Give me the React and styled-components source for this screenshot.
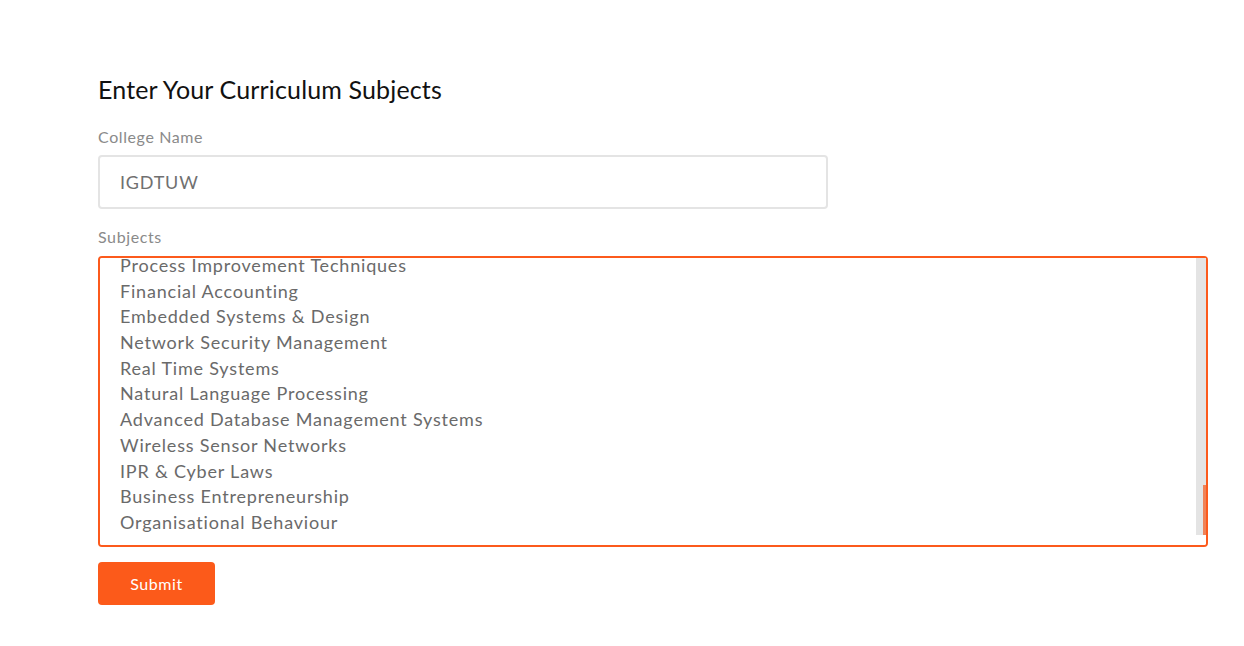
import React, { useLayoutEffect, useRef } from "react";
import styled, { createGlobalStyle } from "styled-components";

const GlobalStyle = createGlobalStyle`
  body {
    margin: 0;
    background: #fff;
    font-family: "Lato", "Open Sans", sans-serif;
  }
`;

const subjects = [
  "Engineering Mathematics I",
  "Engineering Physics",
  "Engineering Chemistry",
  "Basic Electrical Engineering",
  "Programming Fundamentals",
  "Engineering Graphics",
  "Communication Skills",
  "Environmental Sciences",
  "Engineering Mathematics II",
  "Data Structures",
  "Digital Logic Design",
  "Object Oriented Programming",
  "Discrete Mathematics",
  "Computer Organisation",
  "Operating Systems",
  "Design & Analysis of Algorithms",
  "Database Management Systems",
  "Theory of Computation",
  "Computer Networks",
  "Software Engineering",
  "Microprocessors",
  "Compiler Design",
  "Artificial Intelligence",
  "Machine Learning",
  "Computer Graphics",
  "Web Technologies",
  "Cloud Computing",
  "Information Security",
  "Data Mining",
  "Distributed Systems",
  "Mobile Computing",
  "Soft Computing",
  "Big Data Analytics",
  "Internet of Things",
  "Image Processing",
  "Parallel Computing",
  "Software Testing",
  "Human Computer Interaction",
  "Cryptography",
  "Operations Research",
  "Engineering Economics",
  "Project Management",
  "Principles of Management",
  "Technical Writing",
  "Process Improvement Techniques",
  "Financial Accounting",
  "Embedded Systems & Design",
  "Network Security Management",
  "Real Time Systems",
  "Natural Language Processing",
  "Advanced Database Management Systems",
  "Wireless Sensor Networks",
  "IPR & Cyber Laws",
  "Business Entrepreneurship",
  "Organisational Behaviour",
];

const Page = styled.main`
  padding: 74px 36px 40px 98px;
`;

const Form = styled.form`
  width: 1110px;
  display: flex;
  flex-direction: column;
`;

const Title = styled.h2`
  margin: 0 0 23px;
  font-size: 25px;
  font-weight: 400;
  letter-spacing: 0.15px;
  color: #111;
`;

const Label = styled.label`
  font-size: 16px;
  letter-spacing: 0.6px;
  color: #8a8a8a;
  margin-bottom: ${(p) => p.$gap || 9}px;
`;

const Input = styled.input`
  box-sizing: border-box;
  width: 730px;
  height: 54px;
  padding: 0 20px;
  border: 2px solid #e4e4e4;
  border-radius: 4px;
  font-family: inherit;
  font-size: 18px;
  letter-spacing: 0.8px;
  color: #707070;
  margin-bottom: 18px;
  outline: none;
`;

const AreaWrap = styled.div`
  position: relative;
  width: 1110px;
  height: 291px;
  margin-bottom: 15px;
`;

const TextArea = styled.textarea`
  box-sizing: border-box;
  display: block;
  width: 100%;
  height: 100%;
  padding: 10px 20px 9px;
  border: 2px solid #fc5a1c;
  border-radius: 4px;
  font-family: inherit;
  font-size: 18px;
  letter-spacing: 0.8px;
  line-height: 25.7px;
  color: #6a6a6a;
  outline: none;
  resize: none;
`;

const ScrollTrack = styled.div`
  position: absolute;
  top: 2px;
  right: 2px;
  bottom: 12px;
  width: 10px;
  background: #e4e4e4;
  pointer-events: none;
`;

const ScrollThumb = styled.div`
  position: absolute;
  right: 0;
  bottom: 0;
  width: 3px;
  height: 50px;
  background: #ef8358;
`;

const SubmitButton = styled.button`
  align-self: flex-start;
  width: 117px;
  height: 43px;
  border: none;
  border-radius: 4px;
  background: #fc5a1a;
  color: #fff;
  font-family: inherit;
  font-size: 16px;
  letter-spacing: 0.6px;
  cursor: pointer;
`;

export default function App() {
  const areaRef = useRef(null);

  useLayoutEffect(() => {
    if (areaRef.current) {
      areaRef.current.scrollTop = areaRef.current.scrollHeight;
    }
  }, []);

  return (
    <Page>
      <GlobalStyle />
      <Form onSubmit={(e) => e.preventDefault()}>
        <Title>Enter Your Curriculum Subjects</Title>
        <Label htmlFor="college">College Name</Label>
        <Input id="college" defaultValue="IGDTUW" />
        <Label htmlFor="subjects" $gap={10}>Subjects</Label>
        <AreaWrap>
          <TextArea
            id="subjects"
            ref={areaRef}
            defaultValue={subjects.join("\n")}
          />
          <ScrollTrack>
            <ScrollThumb />
          </ScrollTrack>
        </AreaWrap>
        <SubmitButton type="submit">Submit</SubmitButton>
      </Form>
    </Page>
  );
}
